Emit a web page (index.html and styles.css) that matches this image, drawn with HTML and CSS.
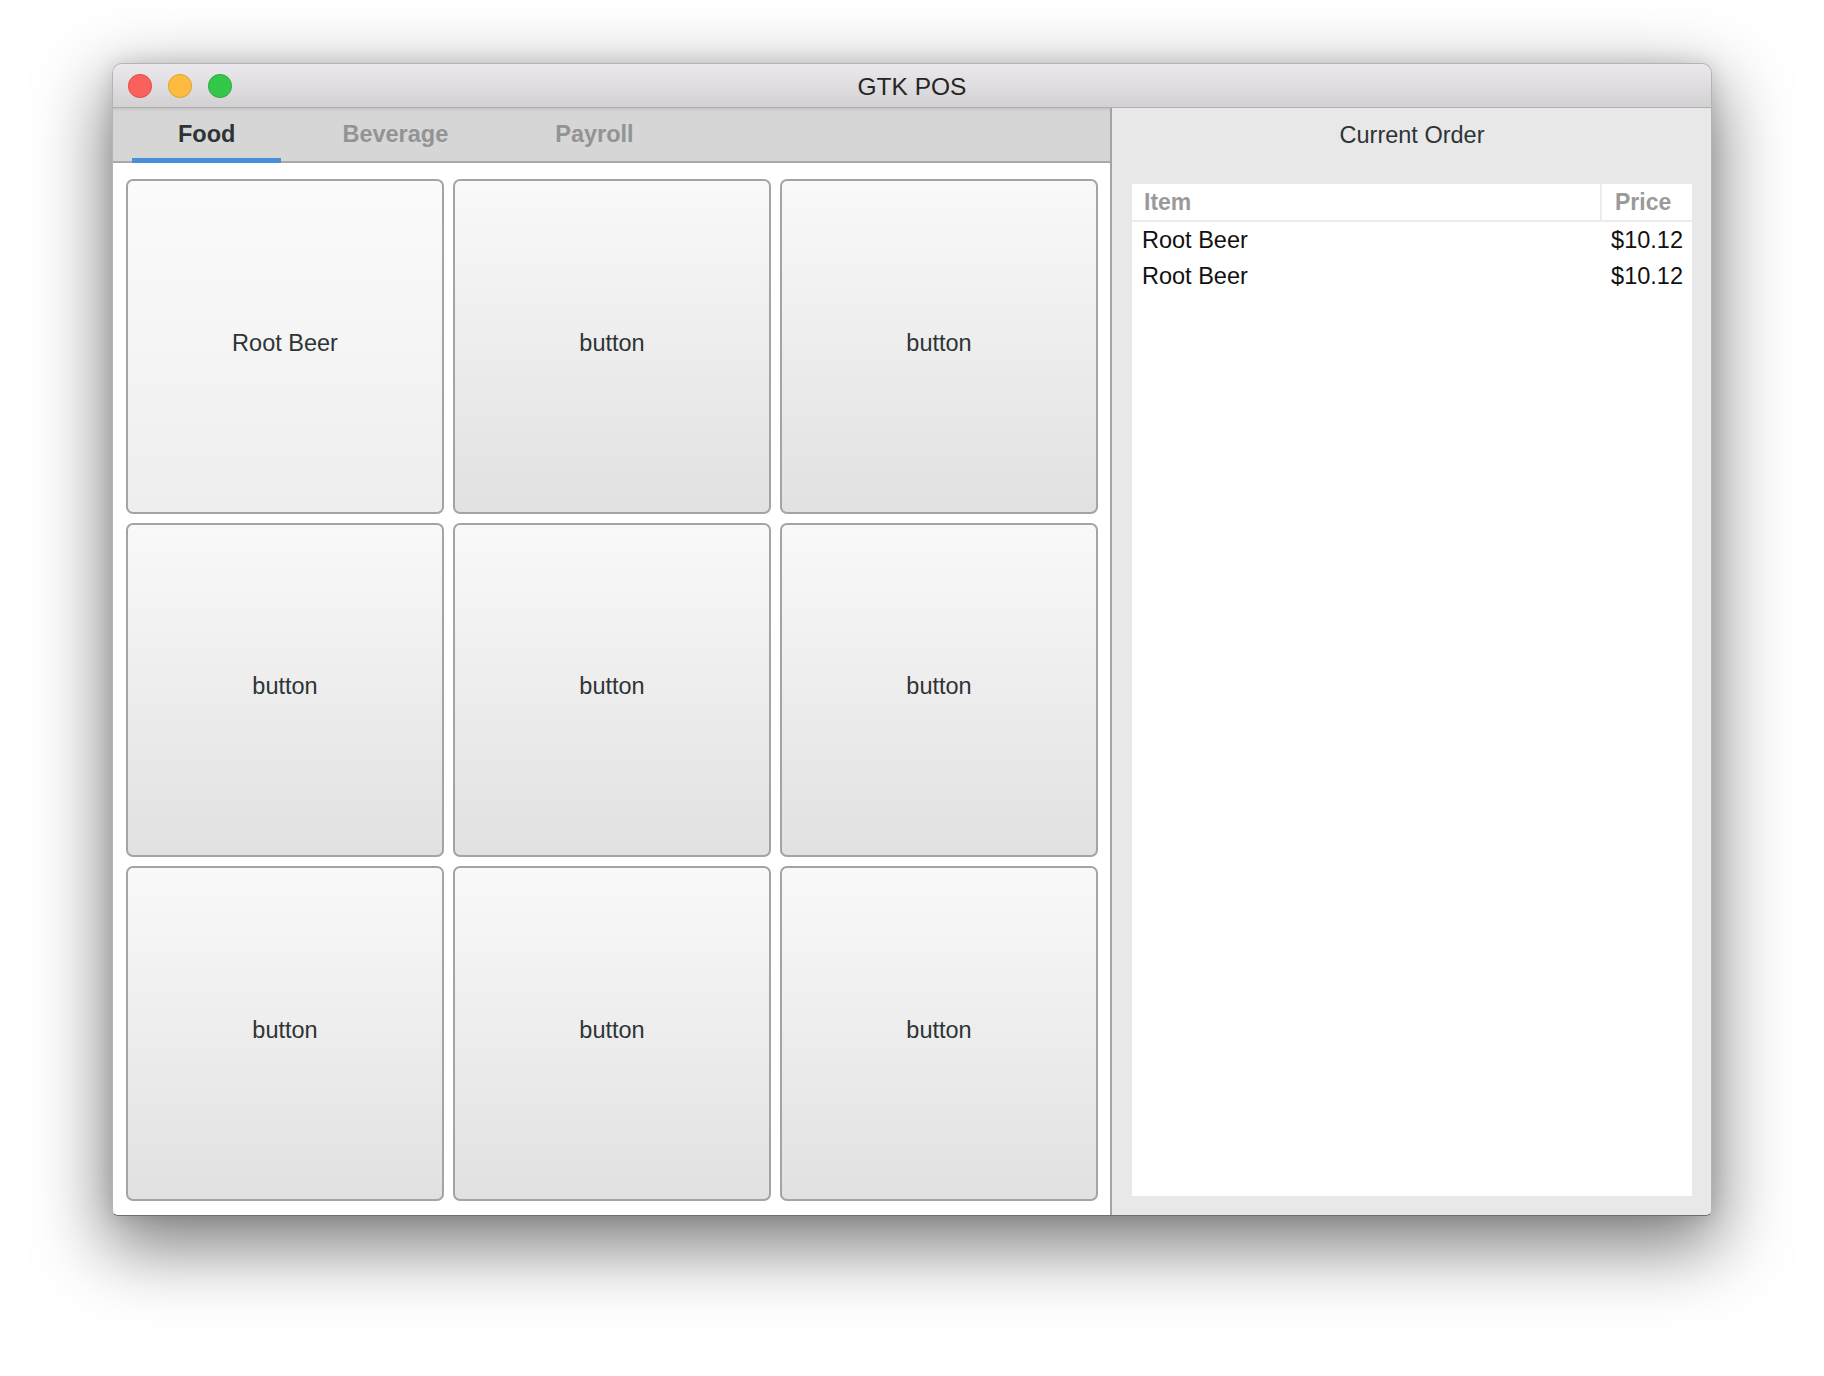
FILE: index.html
```html
<!DOCTYPE html>
<html lang="en">
<head>
<meta charset="utf-8">
<title>GTK POS</title>
<link rel="stylesheet" href="styles.css">
</head>
<body>
<div class="window">
  <div class="titlebar">
    <div class="lights">
      <span class="light red"></span>
      <span class="light yellow"></span>
      <span class="light green"></span>
    </div>
    <div class="title">GTK POS</div>
    <div></div>
  </div>
  <div class="main">
    <div class="left">
      <div class="tabbar">
        <div class="tab active">Food</div>
        <div class="tab">Beverage</div>
        <div class="tab">Payroll</div>
      </div>
      <div class="grid-area">
        <div class="grid">
          <div class="btn hover">Root Beer</div>
          <div class="btn">button</div>
          <div class="btn">button</div>
          <div class="btn">button</div>
          <div class="btn">button</div>
          <div class="btn">button</div>
          <div class="btn">button</div>
          <div class="btn">button</div>
          <div class="btn">button</div>
        </div>
      </div>
    </div>
    <div class="right">
      <div class="order-label">Current Order</div>
      <div class="list">
        <div class="list-head">
          <div class="col-item">Item</div>
          <div class="col-price">Price</div>
        </div>
        <div class="list-row">
          <div class="cell-item">Root Beer</div>
          <div class="cell-price">$10.12</div>
        </div>
        <div class="list-row">
          <div class="cell-item">Root Beer</div>
          <div class="cell-price">$10.12</div>
        </div>
      </div>
    </div>
  </div>
</div>
</body>
</html>
```
FILE: styles.css
```css
* { box-sizing: border-box; }
html, body { margin: 0; padding: 0; }
body {
  background: #ffffff;
  font-family: "Liberation Sans", Arial, Helvetica, sans-serif;
  padding: 63px 0 0 112px;
  width: 1824px;
  height: 1376px;
  overflow: hidden;
}
.window {
  width: 1600px;
  height: 1153px;
  border: 1px solid #b4b4b4;
  border-bottom-color: #6e6e6e;
  border-radius: 10px 10px 6px 6px;
  overflow: hidden;
  display: flex;
  flex-direction: column;
  box-shadow: 0 26px 70px 6px rgba(0,0,0,0.5), 0 0 20px rgba(0,0,0,0.12);
  background: #e8e8e8;
}
.titlebar {
  height: 44px;
  flex: none;
  display: grid;
  grid-template-columns: 1fr auto 1fr;
  align-items: center;
  background: linear-gradient(to bottom, #ebe9eb, #d3d1d3);
  border-bottom: 1px solid #afafaf;
}
.lights {
  display: flex;
  gap: 16.5px;
  padding-left: 15px;
  align-items: center;
}
.light {
  width: 23.5px;
  height: 23.5px;
  border-radius: 50%;
  display: block;
}
.red { background: #fc605c; border: 1px solid #df4944; }
.yellow { background: #fdbc40; border: 1px solid #dea033; }
.green { background: #34c84a; border: 1px solid #28a83a; }
.title {
  font-size: 24.5px;
  color: #262626;
  line-height: 43px;
  padding-top: 1px;
}
.main {
  flex: 1;
  display: flex;
  min-height: 0;
}
.left {
  width: 999px;
  flex: none;
  display: flex;
  flex-direction: column;
  border-right: 2px solid #a4a4a4;
  background: #ffffff;
}
.tabbar {
  height: 55px;
  flex: none;
  display: flex;
  padding-left: 19px;
  background: #d6d6d6;
  border-bottom: 2px solid #a9a9a9;
  box-shadow: inset 0 3px 3px -2px rgba(0,0,0,0.12);
}
.tab {
  position: relative;
  height: 55px;
  margin-bottom: -2px;
  padding: 0 46px;
  margin-right: 15px;
  line-height: 53px;
  font-size: 23.5px;
  font-weight: bold;
  color: #929494;
}
.tab.active {
  color: #2e3436;
  box-shadow: inset 0 -5px 0 #4a90d9;
}
.grid-area {
  flex: 1;
  padding: 16px 12px 14px 13px;
  display: flex;
}
.grid {
  flex: 1;
  display: grid;
  grid-template-columns: repeat(3, 1fr);
  grid-template-rows: repeat(3, 1fr);
  gap: 9px;
}
.btn {
  border: 2px solid #a4a4a4;
  border-radius: 7px;
  background: linear-gradient(to bottom, #f9f9f9, #e1e1e1);
  display: flex;
  align-items: center;
  justify-content: center;
  font-size: 23.5px;
  color: #2e3436;
  padding-bottom: 6px;
}
.btn.hover {
  background: linear-gradient(to bottom, #fbfbfb, #eeeeee);
}
.right {
  flex: 1;
  display: flex;
  flex-direction: column;
  padding: 0 19px 19px 20px;
  background: #e8e8e8;
}
.order-label {
  height: 54px;
  line-height: 54px;
  text-align: center;
  font-size: 23.5px;
  color: #2e3436;
  margin-bottom: 22px;
}
.list {
  flex: 1;
  background: #ffffff;
  display: flex;
  flex-direction: column;
}
.list-head {
  display: flex;
  height: 38px;
  border-bottom: 2px solid #ececec;
  font-size: 23px;
  font-weight: bold;
  color: #9a9a9a;
  line-height: 36px;
}
.col-item {
  flex: 1;
  padding-left: 12px;
}
.col-price {
  width: 92px;
  border-left: 2px solid #ececec;
  padding-left: 13px;
}
.list-row {
  display: flex;
  height: 36px;
  line-height: 36px;
  font-size: 23.5px;
  color: #111111;
}
.cell-item {
  flex: 1;
  padding-left: 10px;
}
.cell-price {
  width: 120px;
  text-align: right;
  padding-right: 9px;
}
```
